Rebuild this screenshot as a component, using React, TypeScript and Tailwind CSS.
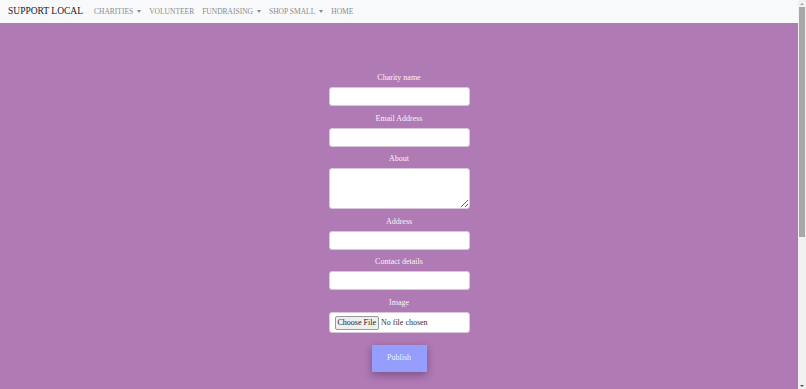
import { useState } from "react"

const fields = [
  { label: "Charity name", kind: "input" },
  { label: "Email Address", kind: "input" },
  { label: "About", kind: "textarea" },
  { label: "Address", kind: "input" },
  { label: "Contact details", kind: "input" },
]

function Caret() {
  return <span className="ml-[4px] inline-block h-0 w-0 border-x-[2.5px] border-t-[3px] border-x-transparent border-t-[#8a8b8c] align-middle" />
}

// window scrollbar, drawn since the page is taller than the viewport
function Scrollbar() {
  return (
    <div className="flex h-[389px] w-2 shrink-0 flex-col bg-[#f1f1f1]">
      <div className="flex h-[7px] items-center justify-center">
        <span className="h-0 w-0 border-x-[2px] border-b-[2px] border-x-transparent border-b-[#a3a3a3]" />
      </div>
      <div className="mx-[1px] h-[230px] bg-[#a8a8a8]" />
      <div className="flex-1" />
      <div className="flex h-[7px] items-center justify-center">
        <span className="h-0 w-0 border-x-[2px] border-t-[2px] border-x-transparent border-t-[#505050]" />
      </div>
    </div>
  )
}

export default function App() {
  const [values, setValues] = useState<Record<string, string>>({})

  const navItems = [
    { name: "CHARITIES", dropdown: true },
    { name: "VOLUNTEER", dropdown: false },
    { name: "FUNDRAISING", dropdown: true },
    { name: "SHOP SMALL", dropdown: true },
    { name: "HOME", dropdown: false },
  ]

  return (
    <div className="flex h-[389px] overflow-hidden" style={{ fontFamily: '"Liberation Serif", "Times New Roman", serif' }}>
      <div className="flex-1">
        <nav className="flex h-[23px] items-center bg-[#f8f9fa] px-2">
          <span className="mr-[7px] text-[9.5px] text-[#1a1a1a]">SUPPORT LOCAL</span>
          <ul className="flex items-center">
            {navItems.map(item => (
              <li key={item.name} className="flex items-center px-[4px] text-[7.5px] text-[#8a8b8c]">
                {item.name}
                {item.dropdown && <Caret />}
              </li>
            ))}
          </ul>
        </nav>

        <main className="min-h-[611px] bg-[#b07ab5] pt-[49px]">
          <form className="mx-auto flex w-[141px] flex-col gap-[6.5px]" onSubmit={e => e.preventDefault()}>
            {fields.map(f => (
              <div key={f.label} className="flex flex-col">
                <label className="mb-[3px] text-center text-[8px] leading-[12px] text-[#fbf3fb]">{f.label}</label>
                {f.kind === "textarea" ? (
                  <textarea
                    className="h-[41px] rounded-[3px] border border-[#d9c8db] bg-white px-1 text-[8px]"
                    value={values[f.label] ?? ""}
                    onChange={e => setValues({ ...values, [f.label]: e.target.value })}
                  />
                ) : (
                  <input
                    className="h-[19px] rounded-[3px] border border-[#d9c8db] bg-white px-1 text-[8px]"
                    value={values[f.label] ?? ""}
                    onChange={e => setValues({ ...values, [f.label]: e.target.value })}
                  />
                )}
              </div>
            ))}
            <div className="flex flex-col">
              <label className="mb-[3px] text-center text-[8px] leading-[12px] text-[#fbf3fb]">Image</label>
              <input
                type="file"
                className="h-[21px] rounded-[3px] border border-[#d9c8db] bg-white px-[5px] py-[3px] text-[8px] text-[#333] file:mr-[2px] file:h-[14px] file:rounded-[2px] file:border file:border-[#9a9a9a] file:bg-[#efefef] file:px-[2px] file:text-[8px] file:text-[#222]"
              />
            </div>
            <button
              type="submit"
              className="mx-auto mt-[5.5px] h-[27px] w-[55px] bg-[#959dfd] text-[8px] text-[#eef0ff] shadow-[0_3px_8px_rgba(60,30,80,0.45)]"
            >
              Publish
            </button>
          </form>
        </main>
      </div>
      <Scrollbar />
    </div>
  )
}
